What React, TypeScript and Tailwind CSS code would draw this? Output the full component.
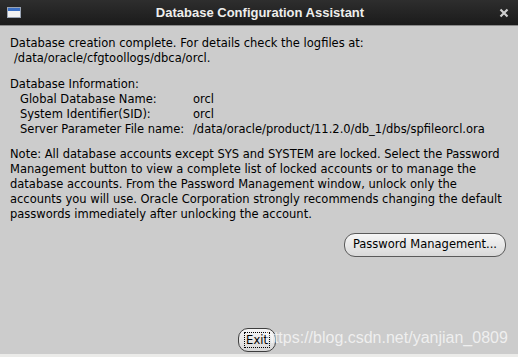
import React from "react";

const body = { fontFamily: '"DejaVu Sans", "Liberation Sans", sans-serif' };

const info = [
  ["Global Database Name:", "orcl"],
  ["System Identifier(SID):", "orcl"],
  ["Server Parameter File name:", "/data/oracle/product/11.2.0/db_1/dbs/spfileorcl.ora"],
];

const note = [
  "Note: All database accounts except SYS and SYSTEM are locked. Select the Password",
  "Management button to view a complete list of locked accounts or to manage the",
  "database accounts. From the Password Management window, unlock only the",
  "accounts you will use. Oracle Corporation strongly recommends changing the default",
  "passwords immediately after unlocking the account.",
];

export default function App() {
  return (
    <div className="relative flex flex-col w-[518px] h-[357px] bg-[#cccccc] overflow-hidden" style={body}>
      {/* title bar */}
      <div className="relative flex items-center h-[26px] bg-gradient-to-b from-[#2e2e2e] to-[#1b1b1b] border-b border-[#8a8a8a]">
        <div className="ml-[7px] w-[14px] h-[11px] bg-[#f2f2f2] border border-[#9aa4b4] flex flex-col">
          <div className="h-[3px] bg-[#3b6fc4]" />
        </div>
        <div
          className="flex-1 text-center text-[13px] font-bold text-[#eeeeec]"
          style={{ fontFamily: '"Liberation Sans", Arial, sans-serif' }}
        >
          Database Configuration Assistant
        </div>
        <svg className="mr-[9px]" width="10" height="10" viewBox="0 0 10 10">
          <path d="M1.5 1.5 L8.5 8.5 M8.5 1.5 L1.5 8.5" stroke="#cfcfcf" strokeWidth="2.2" />
        </svg>
      </div>

      {/* content */}
      <div className="flex flex-col px-[10px] pt-[10px] text-[11.5px] leading-[15px] text-black">
        <div>Database creation complete. For details check the logfiles at:</div>
        <div className="pl-[4px]">/data/oracle/cfgtoollogs/dbca/orcl.</div>

        <div className="mt-[11px]">Database Information:</div>
        {info.map(([k, v]) => (
          <div key={k} className="flex pl-[10px] whitespace-nowrap">
            <span className="w-[173px] shrink-0">{k}</span>
            <span>{v}</span>
          </div>
        ))}

        <div className="mt-[10px] whitespace-nowrap">
          {note.map((l) => (
            <div key={l}>{l}</div>
          ))}
        </div>
      </div>

      <div className="flex justify-end pr-[12px] mt-[11px]">
        <button className="h-[24px] px-[8px] rounded-[11px] border border-[#5a5a5a] bg-gradient-to-b from-[#f6f6f6] to-[#d9d9d9] text-[11.5px] text-black">
          Password Management...
        </button>
      </div>

      <div className="flex-1" />

      <div className="flex justify-center pb-[2px] pr-[4px]">
        <button className="h-[24px] w-[38px] rounded-[10px] border border-[#3e3e3e] bg-gradient-to-b from-[#f6f6f6] to-[#d6d6d6] flex items-center justify-center text-[11.5px] text-black">
          <span className="border border-dotted border-black px-[1px] leading-[14px]">Exit</span>
        </button>
      </div>
      <div className="h-[3px] bg-[#ebebe9]" />

      {/* watermark */}
      <div
        className="absolute left-[265px] top-[329px] text-[16px] leading-[18px] text-white/70 pointer-events-none"
        style={{ fontFamily: '"Liberation Sans", Arial, sans-serif' }}
      >
        https://blog.csdn.net/yanjian_0809
      </div>
    </div>
  );
}
